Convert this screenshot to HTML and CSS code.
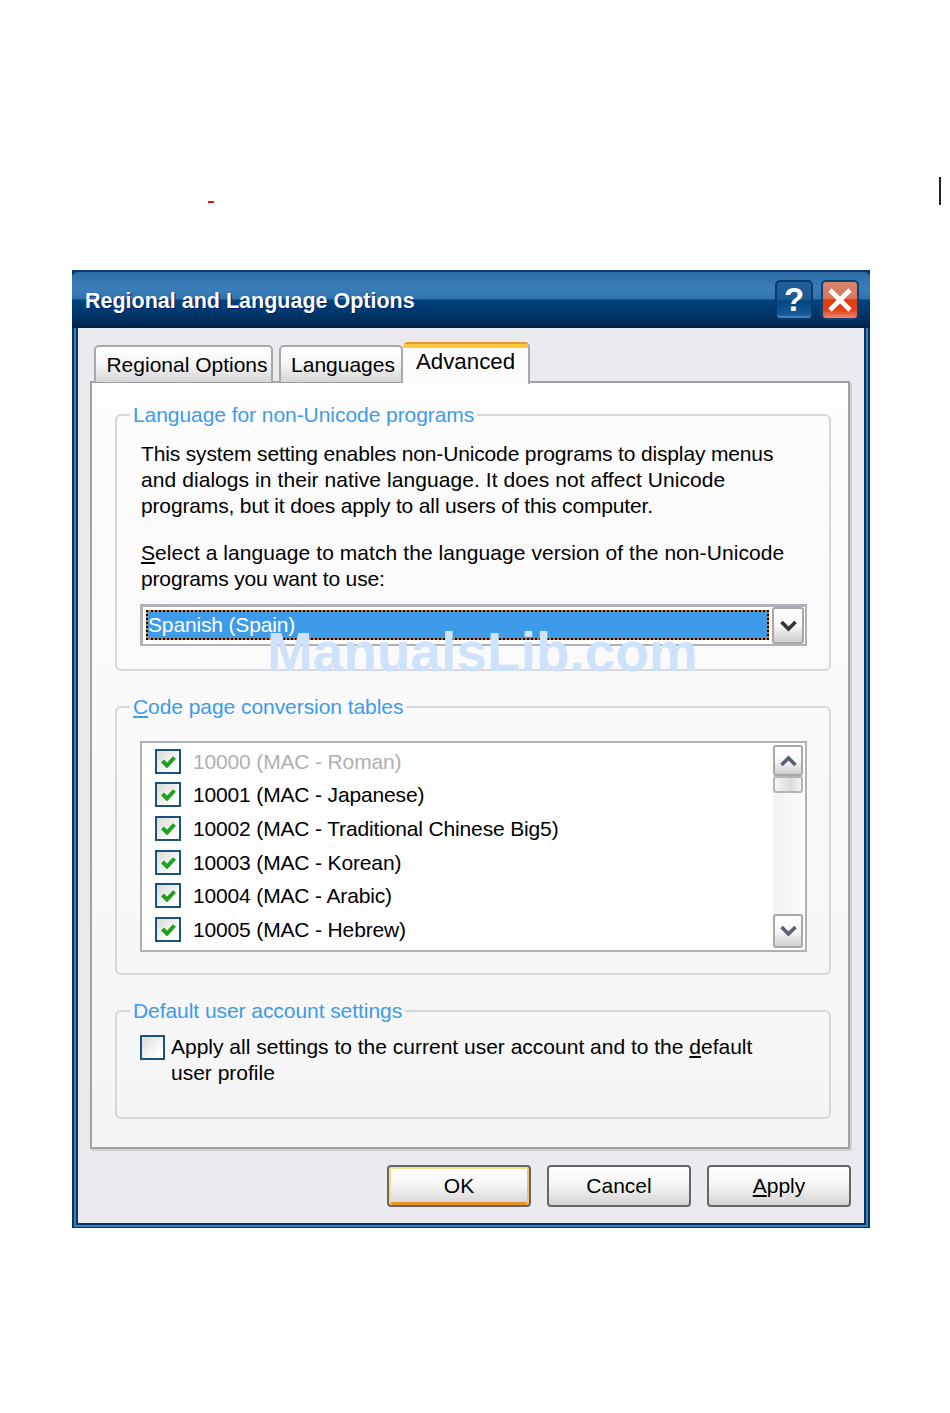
FILE: index.html
```html
<!DOCTYPE html>
<html lang="en">
<head>
<meta charset="utf-8">
<title>Regional and Language Options</title>
<link rel="stylesheet" href="styles.css">
</head>
<body>
<span class="mark-dash"></span>
<span class="mark-line"></span>
<div class="window">
  <header class="titlebar">
    <h1 class="title">Regional and Language Options</h1>
    <div class="title-buttons">
      <button class="cap cap-help" type="button">?</button>
      <button class="cap cap-close" type="button" aria-label="Close">
        <svg viewBox="0 0 24 24" width="24" height="24"><path d="M2 2 L22 22 M22 2 L2 22" stroke="#fff" stroke-width="4.6" fill="none"/></svg>
      </button>
    </div>
  </header>
  <div class="frame">
    <div class="client">
      <nav class="tabs">
        <div class="tab tab-first">Regional Options</div>
        <div class="tab tab-second">Languages</div>
        <div class="tab tab-active">Advanced</div>
      </nav>
      <section class="panel">
        <fieldset class="group group-lang">
          <legend class="legend">Language for non-Unicode programs</legend>
          <p class="para">This system setting enables non-Unicode programs to display menus<br><span class="wide">and dialogs in their native language. It does not affect Unicode</span><br>programs, but it does apply to all users of this computer.</p>
          <p class="para para-second"><span class="wide"><u>S</u>elect a language to match the language version of the non-Unicode</span><br>programs you want to use:</p>
          <div class="combo">
            <div class="combo-value">Spanish (Spain)</div>
            <div class="sbtn combo-btn">
              <svg viewBox="0 0 17 12" width="17" height="12"><path d="M1.5 2 L8.5 9 L15.5 2" stroke="#333" stroke-width="3.6" fill="none"/></svg>
            </div>
          </div>
        </fieldset>
        <fieldset class="group group-code">
          <legend class="legend"><u>C</u>ode page conversion tables</legend>
          <div class="list">
            <div class="rows">
              <div class="row row-disabled"><span class="check"><svg viewBox="0 0 15 13" width="15" height="13"><path d="M1.5 6 L6 10.5 L13.5 2.5" stroke="#1fa01f" stroke-width="4" fill="none"/></svg></span>10000 (MAC - Roman)</div>
              <div class="row"><span class="check"><svg viewBox="0 0 15 13" width="15" height="13"><path d="M1.5 6 L6 10.5 L13.5 2.5" stroke="#1fa01f" stroke-width="4" fill="none"/></svg></span>10001 (MAC - Japanese)</div>
              <div class="row"><span class="check"><svg viewBox="0 0 15 13" width="15" height="13"><path d="M1.5 6 L6 10.5 L13.5 2.5" stroke="#1fa01f" stroke-width="4" fill="none"/></svg></span>10002 (MAC - Traditional Chinese Big5)</div>
              <div class="row"><span class="check"><svg viewBox="0 0 15 13" width="15" height="13"><path d="M1.5 6 L6 10.5 L13.5 2.5" stroke="#1fa01f" stroke-width="4" fill="none"/></svg></span>10003 (MAC - Korean)</div>
              <div class="row"><span class="check"><svg viewBox="0 0 15 13" width="15" height="13"><path d="M1.5 6 L6 10.5 L13.5 2.5" stroke="#1fa01f" stroke-width="4" fill="none"/></svg></span>10004 (MAC - Arabic)</div>
              <div class="row"><span class="check"><svg viewBox="0 0 15 13" width="15" height="13"><path d="M1.5 6 L6 10.5 L13.5 2.5" stroke="#1fa01f" stroke-width="4" fill="none"/></svg></span>10005 (MAC - Hebrew)</div>
            </div>
            <div class="scroll">
              <div class="sbtn scroll-btn"><svg viewBox="0 0 17 12" width="17" height="12"><path d="M1.5 10 L8.5 3 L15.5 10" stroke="#566078" stroke-width="3.6" fill="none"/></svg></div>
              <div class="thumb"></div>
              <div class="track"></div>
              <div class="sbtn scroll-btn scroll-btn-down"><svg viewBox="0 0 17 12" width="17" height="12"><path d="M1.5 2 L8.5 9 L15.5 2" stroke="#566078" stroke-width="3.6" fill="none"/></svg></div>
            </div>
          </div>
        </fieldset>
        <fieldset class="group group-user">
          <legend class="legend">Default user account settings</legend>
          <div class="apply-all">
            <span class="check check-plain"></span>
            <p class="apply-text">Apply all settings to the current user account and to the <u>d</u>efault<br>user profile</p>
          </div>
        </fieldset>
      </section>
      <footer class="actions">
        <button class="btn btn-default" type="button">OK</button>
        <button class="btn" type="button">Cancel</button>
        <button class="btn" type="button"><u>A</u>pply</button>
      </footer>
    </div>
  </div>
</div>
<div class="watermark">ManualsLib.com</div>
</body>
</html>
```
FILE: styles.css
```css
* { box-sizing: border-box; }

html, body { margin: 0; padding: 0; background: #fff; }

body {
  position: relative;
  width: 950px;
  height: 1413px;
  overflow: hidden;
  padding: 270px 0 0 72px;
  font-family: "Liberation Sans", Arial, sans-serif;
  font-size: 21px;
  color: #000;
}

.mark-dash {
  position: absolute;
  left: 208px;
  top: 201px;
  width: 6px;
  height: 2px;
  background: #f01010;
}

.mark-line {
  position: absolute;
  left: 939px;
  top: 177px;
  width: 2px;
  height: 28px;
  background: #222;
}

.watermark {
  position: absolute;
  left: 267px;
  top: 621px;
  font-size: 55px;
  line-height: 62px;
  font-weight: bold;
  color: #cfe2fb;
  white-space: nowrap;
}

.window {
  width: 798px;
  height: 958px;
  display: flex;
  flex-direction: column;
  background: #0a3460;
  padding-bottom: 1px;
}

.titlebar {
  flex: none;
  height: 58px;
  display: flex;
  align-items: center;
  justify-content: space-between;
  padding: 0 11px 0 13px;
  border-top: 2px solid #0a3a6b;
  border-radius: 7px 7px 0 0;
  background: linear-gradient(#2c6da8 0%, #3b7db9 30%, #2f72ae 48%, #03447f 50%, #00386d 72%, #002a54 92%, #001f40 100%);
}

.title {
  margin: 3px 0 0;
  font-size: 21.5px;
  font-weight: bold;
  color: #fff;
  text-shadow: 1px 1px 0 #001c66;
  white-space: nowrap;
}

.title-buttons { display: flex; gap: 8px; }

.cap {
  width: 38px;
  height: 40px;
  padding: 0;
  display: flex;
  align-items: center;
  justify-content: center;
  border: 2px solid #0c3a68;
  border-radius: 5px;
  color: #fff;
  font: bold 33px "Liberation Sans", Arial, sans-serif;
}

.cap-help {
  background: linear-gradient(#1f5f9a 0%, #1c5a94 48%, #03457f 52%, #185a96 90%, #3a7db9 100%);
  box-shadow: inset 0 -2px 0 #3e80bb;
}

.cap-close {
  background: linear-gradient(#d88670 0%, #d9745a 45%, #e03c10 50%, #e24216 78%, #ee8a70 100%);
  border-color: #10406f;
}

.frame {
  flex: 1;
  min-height: 0;
  display: flex;
  border: solid #3b80c0;
  border-width: 0 2px 2px 2px;
  margin: 0 2px;
}

.client {
  flex: 1;
  min-width: 0;
  background: #ebeaef;
  border: solid #0a3460;
  border-width: 0 2px 2px 2px;
  padding: 14px 0 0 12px;
  display: flex;
  flex-direction: column;
}

.tabs {
  flex: none;
  display: flex;
  align-items: flex-end;
  padding-left: 4px;
  position: relative;
  z-index: 1;
  margin-bottom: -1px;
}

.tab {
  height: 37px;
  padding-top: 1px;
  display: flex;
  align-items: center;
  justify-content: center;
  border: 2px solid #a9a9a9;
  border-bottom: 0;
  border-radius: 5px 5px 0 0;
  background: linear-gradient(#fff 0%, #f7f7f7 45%, #d6d6d6 100%);
  white-space: nowrap;
}

.tab-first { width: 179px; margin-right: 6px; padding-left: 7px; }
.tab-second { width: 124px; padding-left: 4px; }

.tab-active {
  width: 127px;
  height: 42px;
  padding: 0 0 2px;
  margin-bottom: -2px;
  border-top: 0;
  border-left: 0;
  font-size: 22.3px;
  background: linear-gradient(#e8952d 0, #e8952d 2px, #ffc73c 2px, #ffc73c 6px, #fcfcfc 6px);
}

.panel {
  width: 760px;
  height: 768px;
  padding: 19px 0 0 23px;
  display: flex;
  flex-direction: column;
  gap: 23px;
  border: 2px solid #a2a2a2;
  box-shadow: 2px 2px 0 #d0d0d4;
  background: linear-gradient(#fdfdfd, #f5f5f5);
}

.group {
  width: 716px;
  margin: 0;
  min-width: 0;
  border: 2px solid #d6d6dc;
  border-radius: 6px;
  padding: 0 0 0 23px;
}

.legend {
  margin-left: -10px;
  padding: 0 3px;
  line-height: 26px;
  letter-spacing: -0.06px;
  color: #3d9be9;
  white-space: nowrap;
}

.group-lang { height: 269px; padding-top: 13px; }
.group-code { height: 281px; padding-top: 21px; }
.group-user { height: 121px; padding-top: 10px; }

.para {
  margin: 0 0 0 1px;
  line-height: 26px;
  letter-spacing: -0.15px;
  white-space: nowrap;
}

.wide { letter-spacing: 0.07px; }

.para-second { margin-top: 21px; }

.combo {
  width: 667px;
  height: 42px;
  margin-top: 12px;
  display: flex;
  align-items: stretch;
  padding: 0 1px 0 3px;
  border: solid #b0b0b8;
  border-width: 3px 2px 2px 3px;
  background: #fff;
}

.combo-value {
  width: 623px;
  height: 30px;
  margin-top: 3px;
  border: 2px dotted #000;
  background: linear-gradient(#3d9be9, #3d9be9) padding-box, linear-gradient(#d9761a, #d9761a) border-box;
  color: #fff;
  line-height: 26px;
  letter-spacing: -0.15px;
  white-space: nowrap;
}

.sbtn {
  display: flex;
  align-items: center;
  justify-content: center;
  border: 2px solid #a8a8a8;
  border-radius: 3px;
  background: linear-gradient(#fff 0%, #f8f8f8 50%, #cfcfcf 100%);
}

.combo-btn {
  width: 32px;
  margin-left: 3px;
  height: 37px;
  align-self: flex-start;
}

.list {
  width: 667px;
  height: 211px;
  display: flex;
  border: 2px solid #b0b0b8;
  background: #fff;
}

.rows {
  flex: 1;
  padding: 2px 0 0 13px;
}

.row {
  height: 33.6px;
  display: flex;
  align-items: center;
  gap: 12px;
  letter-spacing: -0.15px;
  white-space: nowrap;
}

.row-disabled { color: #b0b0b0; }

.check {
  flex: none;
  width: 26px;
  height: 25px;
  display: flex;
  align-items: center;
  justify-content: center;
  border: 2px solid #1c5180;
  background: linear-gradient(135deg, #dcdcd6, #fff 85%);
}

.row .check { margin-top: -1px; }

.check-plain { width: 25px; height: 25px; }

.scroll {
  flex: none;
  width: 30px;
  margin: 2px 2px 2px 0;
  display: flex;
  flex-direction: column;
}

.scroll-btn { height: 31px; flex: none; }
.scroll-btn-down { height: 34px; }

.thumb {
  flex: none;
  height: 17px;
  border: 2px solid #b4b4b4;
  border-radius: 3px;
  background: linear-gradient(90deg, #f4f4f4, #dcdcdc 60%, #f4f4f4);
}

.track {
  flex: 1;
  background: linear-gradient(90deg, #f2f2f2, #fbfbfb);
}

.apply-all {
  display: flex;
  gap: 6px;
}

.apply-text {
  margin: 0;
  line-height: 26px;
  white-space: nowrap;
}

.group-user .check-plain { margin-top: 1px; }

.actions {
  flex: none;
  display: flex;
  justify-content: flex-end;
  gap: 16px;
  margin-top: 16px;
  padding-right: 13px;
}

.btn {
  width: 144px;
  height: 42px;
  padding: 0;
  border: 2px solid #666;
  border-radius: 4px;
  background: linear-gradient(#fff 0%, #f6f6f6 45%, #d4d4d4 100%);
  color: #000;
  font: 21px "Liberation Sans", Arial, sans-serif;
}

.btn-default {
  box-shadow: inset 0 2px 0 #f6e08e, inset 2px 0 0 #f3d98a, inset -2px 0 0 #efc26b, inset 0 -3px 0 #e8922e;
}
```
